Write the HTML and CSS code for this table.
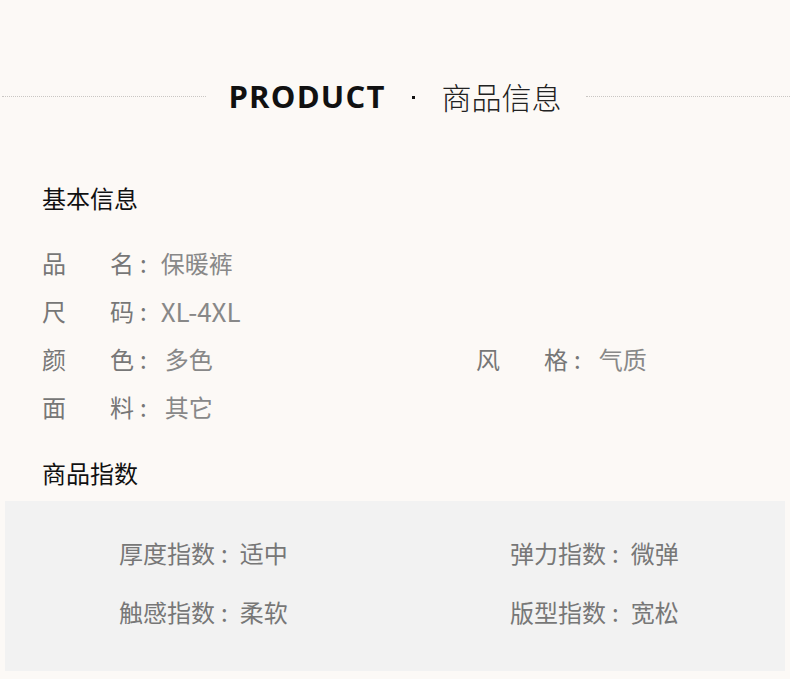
FILE: index.html
```html
<!DOCTYPE html>
<html lang="zh-CN">
<head>
    <meta charset="UTF-8">
    <title>商品信息</title>
    <link rel="stylesheet" href="styles.css">
</head>
<body>
    <div id="page">
        <div class="title-bar">
            <div class="title-line"></div>
            <div class="title">
                <span class="title-en">PRODUCT</span>
                <span class="title-dot"></span>
                <span class="title-cn">商品信息</span>
            </div>
            <div class="title-line"></div>
        </div>

        <h2 class="section-head">基本信息</h2>
        <div class="info-grid">
            <div class="info-item"><span class="label"><i>品</i><i>名</i></span><span class="colon">:</span><span class="value">保暖裤</span></div>
            <div class="info-item"></div>
            <div class="info-item"><span class="label"><i>尺</i><i>码</i></span><span class="colon">:</span><span class="value latin">XL-4XL</span></div>
            <div class="info-item"></div>
            <div class="info-item"><span class="label"><i>颜</i><i>色</i></span><span class="colon">:</span><span class="value shift">多色</span></div>
            <div class="info-item"><span class="label"><i>风</i><i>格</i></span><span class="colon">:</span><span class="value shift">气质</span></div>
            <div class="info-item"><span class="label"><i>面</i><i>料</i></span><span class="colon">:</span><span class="value shift">其它</span></div>
        </div>

        <h2 class="section-head index-head">商品指数</h2>
        <div class="index-panel">
            <div class="index-item">厚度指数<span class="colon">:</span>适中</div>
            <div class="index-item">弹力指数<span class="colon">:</span>微弹</div>
            <div class="index-item">触感指数<span class="colon">:</span>柔软</div>
            <div class="index-item">版型指数<span class="colon">:</span>宽松</div>
        </div>
    </div>
</body>
</html>
```

FILE: styles.css
```css
* {
    margin: 0;
    padding: 0;
    box-sizing: border-box;
}

body {
    background-color: #fcf9f6;
    color: #777;
    font-family: "Noto Sans CJK SC", "Noto Sans", sans-serif;
    width: 790px;
    height: 679px;
    overflow: hidden;
}

/* header with dotted rules on both sides */
.title-bar {
    display: flex;
    align-items: center;
    height: 40px;
    margin-top: 76px;
    padding-left: 2px;
}

.title-line {
    flex: 1;
    border-top: 1px dotted #c9c6c3;
}

.title {
    display: flex;
    align-items: center;
    margin: 0 24px 0 22px;
    color: #111;
}

.title-en {
    font-family: "Open Sans", sans-serif;
    font-weight: 700;
    font-size: 31px;
    letter-spacing: 1.2px;
}

.title-dot {
    width: 3px;
    height: 3px;
    background: #111;
    margin: 2px 27px 0 26px;
}

.title-cn {
    font-size: 30px;
    font-weight: 300;
    color: #222;
}

.section-head {
    font-size: 24px;
    font-weight: 400;
    line-height: 36px;
    color: #111;
    margin: 64px 0 0 42px;
}

.info-grid {
    display: grid;
    grid-template-columns: 434px 1fr;
    margin: 22px 0 0 42px;
}

.info-item {
    display: flex;
    align-items: center;
    height: 48px;
    font-size: 24px;
}

.label {
    display: flex;
    justify-content: space-between;
    width: 92px;
}

.label i {
    font-style: normal;
}

.colon {
    margin: 0 14px 0 6px;
}

.value {
    color: #888;
}

.value.latin {
    font-size: 26px;
}

.value.shift {
    margin-left: 4px;
}

.index-head {
    margin-top: 25px;
}

.index-panel {
    display: grid;
    grid-template-columns: 391px 1fr;
    align-content: start;
    row-gap: 29px;
    height: 170px;
    margin: 10px 5px 0;
    padding: 37px 0 0 114px;
    background: #f2f2f2;
}

.index-item {
    font-size: 24px;
    line-height: 30px;
    color: #777;
}

.index-item .colon {
    margin: 0 12px 0 6px;
}
```
